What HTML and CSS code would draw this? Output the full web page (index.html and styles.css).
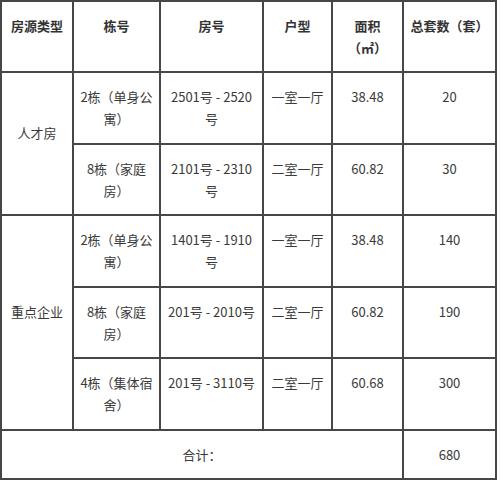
FILE: index.html
```html
<!DOCTYPE html>
<html lang="zh-CN">
<head>
<meta charset="utf-8">
<link rel="stylesheet" href="styles.css">
</head>
<body>
<div class="table">
  <div class="cell head">房源类型</div>
  <div class="cell head">栋号</div>
  <div class="cell head">房号</div>
  <div class="cell head">户型</div>
  <div class="cell head">面积<br>（㎡）</div>
  <div class="cell head">总套数（套）</div>

  <div class="cell group g1">人才房</div>
  <div class="cell">2栋（单身公寓）</div>
  <div class="cell">2501号 - 2520号</div>
  <div class="cell">一室一厅</div>
  <div class="cell">38.48</div>
  <div class="cell">20</div>

  <div class="cell">8栋（家庭房）</div>
  <div class="cell">2101号 - 2310号</div>
  <div class="cell">二室一厅</div>
  <div class="cell">60.82</div>
  <div class="cell">30</div>

  <div class="cell group g2">重点企业</div>
  <div class="cell">2栋（单身公寓）</div>
  <div class="cell">1401号 - 1910号</div>
  <div class="cell">一室一厅</div>
  <div class="cell">38.48</div>
  <div class="cell">140</div>

  <div class="cell">8栋（家庭房）</div>
  <div class="cell">201号 - 2010号</div>
  <div class="cell">二室一厅</div>
  <div class="cell">60.82</div>
  <div class="cell">190</div>

  <div class="cell">4栋（集体宿舍）</div>
  <div class="cell">201号 - 3110号</div>
  <div class="cell">二室一厅</div>
  <div class="cell">60.68</div>
  <div class="cell">300</div>

  <div class="cell total">合计：</div>
  <div class="cell">680</div>
</div>
</body>
</html>
```

FILE: styles.css
```css
html, body {
  margin: 0;
  padding: 0;
  background: #ffffff;
}

.table {
  width: 497px;
  box-sizing: border-box;
  display: grid;
  grid-template-columns: 70px 85px 101px 67px 69px 91px;
  grid-template-rows: 69px 70px 69px 70px 69px 70px 47px;
  gap: 2px;
  padding: 2px;
  background: #474747;
  font-family: "Noto Sans CJK SC", "Noto Sans", sans-serif;
  font-size: 13px;
  line-height: 22px;
  color: #3a3a3a;
}

.cell {
  background: #ffffff;
  text-align: center;
  padding: 13px 5px 0;
  overflow: hidden;
}

.head {
  font-weight: 700;
  color: #333333;
}

.group {
  display: flex;
  align-items: center;
  justify-content: center;
  padding: 0 5px 22px;
}

.g1 {
  grid-row: 2 / span 2;
}

.g2 {
  grid-row: 4 / span 3;
}

.total {
  grid-column: 1 / span 5;
}
```
